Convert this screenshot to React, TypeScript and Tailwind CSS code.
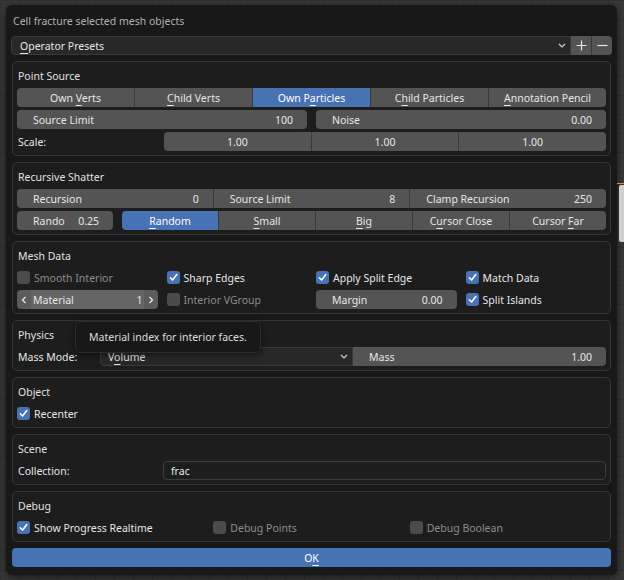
import React from 'react';

// Blender-style "Cell fracture" operator dialog

type Item = [string, number?];

function Mn({ text, at }: { text: string; at?: number }) {
  if (at === undefined) return <>{text}</>;
  return (
    <>
      {text.slice(0, at)}
      <span className="underline decoration-1 underline-offset-[3px]">{text[at]}</span>
      {text.slice(at + 1)}
    </>
  );
}

function Chevron({ dir = 'down' }: { dir?: 'down' | 'left' | 'right' }) {
  if (dir === 'left')
    return (
      <svg width="6" height="8" viewBox="0 0 6 8" fill="none">
        <path d="M4.5 1 L1.5 4 L4.5 7" stroke="#e6e6e6" strokeWidth="1.3" />
      </svg>
    );
  if (dir === 'right')
    return (
      <svg width="6" height="8" viewBox="0 0 6 8" fill="none">
        <path d="M1.5 1 L4.5 4 L1.5 7" stroke="#e6e6e6" strokeWidth="1.3" />
      </svg>
    );
  return (
    <svg width="8" height="5" viewBox="0 0 8 5" fill="none">
      <path d="M1 1 L4 4 L7 1" stroke="#cfcfcf" strokeWidth="1.2" />
    </svg>
  );
}

function Panel({ title, children }: { title: string; children: React.ReactNode }) {
  return (
    <div className="rounded-[5px] border border-[#353535] bg-[#1d1d1d] px-[4px] pb-[4px]">
      <div className="h-[26px] flex items-center pt-[3px] pl-[1px] text-[#e0e0e0]">{title}</div>
      <div className="flex flex-col gap-[3px]">{children}</div>
    </div>
  );
}

function Seg({ items, active, className = '' }: { items: Item[]; active: number; className?: string }) {
  return (
    <div className={`flex h-[19px] rounded-[4px] overflow-hidden ${className}`}>
      {items.map(([label, at], i) => (
        <div
          key={label}
          className={`flex-1 flex items-center justify-center pt-[2px] ${i > 0 ? 'border-l border-[#3a3a3a]' : ''} ${
            i === active ? 'bg-[#4772b3] text-white' : 'bg-[#545454] text-[#e6e6e6]'
          }`}
        >
          <span>
            <Mn text={label} at={at} />
          </span>
        </div>
      ))}
    </div>
  );
}

function Num({ label, value, className = '' }: { label?: string; value: string; className?: string }) {
  return (
    <div
      className={`flex items-center h-[19px] pt-[2px] bg-[#545454] text-[#e6e6e6] ${
        label ? 'justify-between pl-[16px] pr-[14px]' : 'justify-center'
      } ${className}`}
    >
      {label && <span>{label}</span>}
      <span>{value}</span>
    </div>
  );
}

function Check({ label, checked, disabled }: { label: string; checked?: boolean; disabled?: boolean }) {
  return (
    <div className="flex items-center h-[19px] gap-[4px]">
      <div
        className={`w-[13px] h-[13px] rounded-[3px] flex items-center justify-center ${
          checked ? 'bg-[#4772b3]' : disabled ? 'bg-[#4b4b4b]' : 'bg-[#545454]'
        }`}
      >
        {checked && (
          <svg width="11" height="11" viewBox="0 0 12 12" fill="none">
            <path d="M2.5 6.3 L5 8.8 L9.6 2.8" stroke="white" strokeWidth="1.7" strokeLinecap="round" strokeLinejoin="round" />
          </svg>
        )}
      </div>
      <span className={`pt-[2px] ${disabled ? 'text-[#8c8c8c]' : 'text-[#e6e6e6]'}`}>{label}</span>
    </div>
  );
}

export default function App() {
  return (
    <div className="relative w-[624px] h-[580px] overflow-hidden bg-[#393939] bg-[linear-gradient(to_right,#323232_1px,transparent_1px),linear-gradient(to_bottom,#323232_1px,transparent_1px)] bg-[length:19px_19px] font-['Noto_Sans',sans-serif] text-[10.5px] leading-none">
      {/* bits of the editor behind the dialog */}
      <div className="absolute left-[617px] top-[183px] w-[7px] h-[1px] bg-[#e08a3a]" />
      <div className="absolute left-[619px] top-[185px] w-[5px] h-[57px] bg-[#cfcfcf] rounded-l-[2px]" />

      <div className="ml-[6px] mt-[5px] w-[611px] h-[570px] bg-[#181818] rounded-[6px] px-[6px] pt-[6px] flex flex-col shadow-[0_2px_8px_rgba(0,0,0,0.6)]">
        <div className="h-[20px] flex items-center pl-[1px] text-[#b0b0b0]">Cell fracture selected mesh objects</div>

        {/* presets */}
        <div className="mt-[5px] -mx-[1px] h-[19px] flex">
          <div className="flex-1 flex items-center justify-between bg-[#282828] border border-[#3a3a3a] rounded-l-[4px] pl-[8px] pr-[4px] text-[#e6e6e6]">
            <span className="pt-[2px]">
              <Mn text="Operator Presets" at={0} />
            </span>
            <Chevron />
          </div>
          <div className="w-[21px] flex items-center justify-center bg-[#545454] border-r border-[#3a3a3a]">
            <svg width="11" height="11" viewBox="0 0 11 11">
              <path d="M5.5 0.5 V10.5 M0.5 5.5 H10.5" stroke="#e6e6e6" strokeWidth="1.2" />
            </svg>
          </div>
          <div className="w-[20px] flex items-center justify-center bg-[#545454] rounded-r-[4px]">
            <svg width="11" height="11" viewBox="0 0 11 11">
              <path d="M0.5 5.5 H10.5" stroke="#e6e6e6" strokeWidth="1.2" />
            </svg>
          </div>
        </div>

        <div className="mt-[6px] flex flex-col gap-[6px]">
          <Panel title="Point Source">
            <Seg
              active={2}
              items={[
                ['Own Verts', 4],
                ['Child Verts', 0],
                ['Own Particles', 5],
                ['Child Particles', 1],
                ['Annotation Pencil', 0],
              ]}
            />
            <div className="grid grid-cols-2 gap-x-[9px]">
              <Num label="Source Limit" value="100" className="rounded-[4px]" />
              <Num label="Noise" value="0.00" className="rounded-[4px]" />
            </div>
            <div className="flex h-[19px]">
              <div className="w-[147px] flex items-center pt-[2px] pl-[1px] text-[#e6e6e6]">Scale:</div>
              <div className="flex-1 flex rounded-[4px] overflow-hidden">
                <Num value="1.00" className="flex-1" />
                <Num value="1.00" className="flex-1 border-l border-[#3a3a3a]" />
                <Num value="1.00" className="flex-1 border-l border-[#3a3a3a]" />
              </div>
            </div>
          </Panel>

          <Panel title="Recursive Shatter">
            <div className="flex rounded-[4px] overflow-hidden">
              <Num label="Recursion" value="0" className="flex-1" />
              <Num label="Source Limit" value="8" className="flex-1 border-l border-[#3a3a3a]" />
              <Num label="Clamp Recursion" value="250" className="flex-1 border-l border-[#3a3a3a]" />
            </div>
            <div className="flex gap-[9px]">
              <Num label="Rando" value="0.25" className="w-[96px] rounded-[4px]" />
              <Seg
                className="flex-1"
                active={0}
                items={[
                  ['Random', 0],
                  ['Small', 0],
                  ['Big', 0],
                  ['Cursor Close', 1],
                  ['Cursor Far', 7],
                ]}
              />
            </div>
          </Panel>

          <Panel title="Mesh Data">
            <div className="grid grid-cols-4 gap-x-[9px] gap-y-[3px]">
              <Check label="Smooth Interior" disabled />
              <Check label="Sharp Edges" checked />
              <Check label="Apply Split Edge" checked />
              <Check label="Match Data" checked />
              <div className="flex h-[19px] rounded-[4px] overflow-hidden text-[#e6e6e6]">
                <div className="w-[14px] flex items-center justify-center bg-[#5c5c5c]">
                  <Chevron dir="left" />
                </div>
                <div className="flex-1 flex items-center justify-between pt-[2px] bg-[#656565] pl-[2px] pr-[1px]">
                  <span>Material</span>
                  <span>1</span>
                </div>
                <div className="w-[14px] flex items-center justify-center bg-[#5c5c5c]">
                  <Chevron dir="right" />
                </div>
              </div>
              <Check label="Interior VGroup" disabled />
              <Num label="Margin" value="0.00" className="rounded-[4px]" />
              <Check label="Split Islands" checked />
            </div>
          </Panel>

          <Panel title="Physics">
            <div className="flex h-[19px]">
              <div className="w-[83px] flex items-center pt-[2px] pl-[1px] text-[#e6e6e6]">Mass Mode:</div>
              <div className="w-[253px] flex items-center justify-between bg-[#282828] border border-[#3a3a3a] rounded-l-[4px] pl-[7px] pr-[4px] text-[#e6e6e6]">
                <span className="pt-[2px]">
                  <Mn text="Volume" at={1} />
                </span>
                <Chevron />
              </div>
              <Num label="Mass" value="1.00" className="flex-1 rounded-r-[4px]" />
            </div>
          </Panel>

          <Panel title="Object">
            <Check label="Recenter" checked />
          </Panel>

          <Panel title="Scene">
            <div className="flex h-[19px]">
              <div className="w-[146px] flex items-center pt-[2px] pl-[1px] text-[#e6e6e6]">Collection:</div>
              <div className="flex-1 flex items-center pt-[2px] bg-[#1d1d1d] border border-[#3d3d3d] rounded-[4px] pl-[7px] text-[#e6e6e6]">
                frac
              </div>
            </div>
          </Panel>

          <Panel title="Debug">
            <div className="grid grid-cols-3">
              <Check label="Show Progress Realtime" checked />
              <Check label="Debug Points" disabled />
              <Check label="Debug Boolean" disabled />
            </div>
          </Panel>
        </div>

        <div className="mt-[6px] h-[19px] flex items-center justify-center pt-[2px] bg-[#4772b3] rounded-[4px] text-white">
          <span>
            <Mn text="OK" at={1} />
          </span>
        </div>
      </div>

      {/* tooltip over the Physics panel */}
      <div className="absolute left-[75px] top-[321px] w-[186px] h-[32px] flex items-center pl-[13px] bg-[#181818] border border-[#2c2c2c] rounded-[5px] text-[#dcdcdc] shadow-[0_2px_6px_rgba(0,0,0,0.5)]">
        Material index for interior faces.
      </div>
    </div>
  );
}
